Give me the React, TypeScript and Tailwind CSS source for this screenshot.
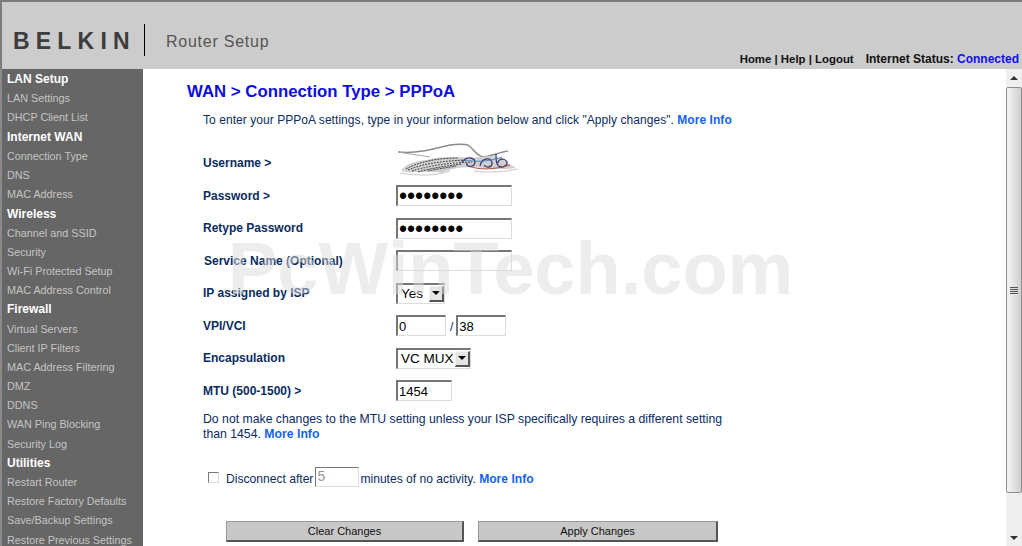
const sideNav = [
  { title: "LAN Setup", links: ["LAN Settings", "DHCP Client List"] },
  { title: "Internet WAN", links: ["Connection Type", "DNS", "MAC Address"] },
  { title: "Wireless", links: ["Channel and SSID", "Security", "Wi-Fi Protected Setup", "MAC Address Control"] },
  { title: "Firewall", links: ["Virtual Servers", "Client IP Filters", "MAC Address Filtering", "DMZ", "DDNS", "WAN Ping Blocking", "Security Log"] },
  { title: "Utilities", links: ["Restart Router", "Restore Factory Defaults", "Save/Backup Settings", "Restore Previous Settings"] },
];

const inputClass =
  "h-[21px] border-t-2 border-l-2 border-r border-b border-t-[#767676] border-l-[#767676] border-r-[#dcdcdc] border-b-[#dcdcdc] bg-white px-[1px] text-[13px] text-black outline-none";

const MoreInfo = () => <a className="font-bold text-[#1464f0]">More Info</a>;

const Row = ({ label, children, indent }: { label: string; children: React.ReactNode; indent?: boolean }) => (
  <div className="flex h-[32.5px] items-center">
    <div className={`w-[193px] text-[12px] font-bold text-[#0b2c5f] ${indent ? "pl-[1px]" : ""}`}>{label}</div>
    {children}
  </div>
);

const FakeSelect = ({ value, width }: { value: string; width: string }) => (
  <div className={`flex h-[21px] items-center justify-between border-t-2 border-l-2 border-r border-b border-t-[#767676] border-l-[#767676] border-r-[#dcdcdc] border-b-[#dcdcdc] bg-white pl-[3px] text-[13.5px] text-black ${width}`}>
    <span>{value}</span>
    <span className="flex h-[16px] w-[15px] items-center justify-center border border-r-2 border-b-2 border-[#f4f4f4] border-r-[#555] border-b-[#555] bg-[#e4e4e4]">
      <span className="h-0 w-0 border-x-[4px] border-t-[4px] border-x-transparent border-t-black" />
    </span>
  </div>
);

const CaptchaBlob = () => (
  <svg width="124" height="34" viewBox="0 0 124 34" className="-mt-[6px]">
    {/* outline on top */}
    <path d="M2 9 C20 11 38 6 54 2 C62 1 68 1 72 2 C78 6 80 13 88 14 C96 13 104 9 112 8" fill="none" stroke="#8c8c8c" strokeWidth="1.5" />
    <path d="M2 9 C12 11 24 12 34 14" fill="none" stroke="#a8a8a8" strokeWidth="1" />
    {/* body */}
    <path d="M5 28 C8 22 16 19 30 17 C46 13 62 14 78 15 C90 12 104 12 112 20 L120 25 C108 27 92 26 78 24 C64 24 54 26 46 30 C30 27 16 31 5 28 Z" fill="#cfcfcf" />
    <path d="M10 26 C24 18 44 15 62 15 M12 27 C28 20 48 18 70 17 M16 28 C32 23 50 20 76 19 M22 29 C36 25 50 23 66 21 M32 28 C40 26 50 25 60 23" fill="none" stroke="#3c3c3c" strokeWidth="1" strokeDasharray="2 1" />
    <path d="M8 28 C24 21 42 18 58 18 M20 27 C34 22 50 22 64 19" fill="none" stroke="#f4f4f4" strokeWidth="0.8" strokeDasharray="1 2" />
    {/* swirls */}
    <path d="M66 19 C72 12 82 15 78 22 C74 25 70 23 71 20 M84 23 C86 14 96 14 96 20 C96 25 90 25 88 22 M100 11 C100 17 100 23 105 24 C111 24 114 18 107 16 C104 16 102 18 102 20" fill="none" stroke="#3f3a78" strokeWidth="1.3" />
    <path d="M72 23 C84 27 96 27 114 22" fill="none" stroke="#b04030" strokeWidth="0.9" />
    <path d="M68 17 C80 19 92 19 106 14" fill="none" stroke="#3a7ab0" strokeWidth="0.8" />
    {/* faint lower edge */}
    <path d="M4 30 C22 33 40 33 54 28 M78 28 C92 30 108 29 122 26" fill="none" stroke="#c8c8c8" strokeWidth="1" />
  </svg>
);

const Scrollbar = () => (
  <div className="flex w-[16px] shrink-0 flex-col bg-[#efefef]">
    <div className="flex h-[18px] items-center justify-center">
      <span className="h-0 w-0 border-x-[4px] border-b-[4px] border-x-transparent border-b-[#333]" />
    </div>
    <div className="flex h-[406px] items-center justify-center rounded-[2px] border border-[#8f8f8f] bg-gradient-to-r from-[#f4f4f4] to-[#cfcfcf]">
      <div className="flex w-[8px] flex-col gap-[1px]">
        <span className="h-[1px] bg-[#555]" />
        <span className="h-[1px] bg-[#555]" />
        <span className="h-[1px] bg-[#555]" />
        <span className="h-[1px] bg-[#555]" />
      </div>
    </div>
    <div className="flex-1" />
    <div className="flex h-[16px] items-center justify-center">
      <span className="h-0 w-0 border-x-[4px] border-t-[4px] border-x-transparent border-t-[#333]" />
    </div>
  </div>
);

export default function App() {
  return (
    <div className="flex h-[546px] w-[1022px] flex-col overflow-hidden font-['Liberation_Sans',Arial,sans-serif]">
      {/* HEADER */}
      <header className="flex h-[69px] shrink-0 border-t-2 border-l-2 border-[#7c7c7c] bg-[#cccccc]">
        <div className="flex items-start pt-[22px]">
          <div className="ml-[11px] mt-[4px] h-[26px] w-[131px] text-[23px] font-bold leading-[26px] tracking-[6.2px] text-[#3d3d3d]">BELKIN</div>
          <div className="h-[32px] w-px bg-black" />
          <div className="ml-[21px] mt-[8px] text-[16px] leading-[20px] tracking-[0.75px] text-[#555]">Router Setup</div>
        </div>
        <div className="ml-auto flex items-baseline self-end pb-[3px] pr-[3px] font-bold leading-[14px] text-[#111]">
          <span className="text-[11.4px]">Home | Help | Logout</span>
          <span className="ml-[12px] whitespace-pre text-[12px]">Internet Status: </span>
          <span className="text-[12px] text-[#1010f0]">Connected</span>
        </div>
      </header>

      <div className="flex min-h-0 flex-1">
        {/* SIDEBAR */}
        <nav className="w-[143px] shrink-0 border-l-2 border-[#8a8a8a] bg-[#666666] pl-[5px] pt-[0.6px]">
          {sideNav.map((group) => (
            <div key={group.title}>
              <div className="flex h-[19.2px] items-center text-[12px] font-bold text-white">{group.title}</div>
              {group.links.map((link) => (
                <div key={link} className="flex h-[19.2px] items-center whitespace-nowrap text-[10.8px] text-[#c4c4c4]">{link}</div>
              ))}
            </div>
          ))}
        </nav>

        {/* MAIN */}
        <main className="relative min-w-0 flex-1 overflow-hidden bg-white pl-[44px] pt-[13px]">
          <h1 className="text-[16.8px] font-bold leading-[20px] text-[#0d0de0]">WAN &gt; Connection Type &gt; PPPoA</h1>
          <div className="ml-[16px]">
            <p className="mt-[11px] text-[12px] leading-[14px] tracking-[0.055px] text-[#0b2c5f]">
              To enter your PPPoA settings, type in your information below and click "Apply changes". <MoreInfo />
            </p>
            <div className="mt-[20px]">
              <Row label="Username >">
                <CaptchaBlob />
              </Row>
              <Row label="Password >">
                <input readOnly type="password" value="password" className={`${inputClass} w-[116px] text-[23px]`} />
              </Row>
              <Row label="Retype Password">
                <input readOnly type="password" value="password" className={`${inputClass} w-[116px] text-[23px]`} />
              </Row>
              <Row label="Service Name (Optional)" indent>
                <input readOnly className={`${inputClass} w-[116px] bg-transparent`} />
              </Row>
              <Row label="IP assigned by ISP">
                <FakeSelect value="Yes" width="w-[49px]" />
              </Row>
              <Row label="VPI/VCI">
                <input readOnly value="0" className={`${inputClass} w-[50px]`} />
                <span className="ml-[4px] mr-[3px] mt-[3px] text-[12px] text-[#0b2c5f]">/</span>
                <input readOnly value="38" className={`${inputClass} w-[50px]`} />
              </Row>
              <Row label="Encapsulation">
                <FakeSelect value="VC MUX" width="w-[75px]" />
              </Row>
              <Row label="MTU (500-1500) >">
                <input readOnly value="1454" className={`${inputClass} w-[56px]`} />
              </Row>
            </div>
            <p className="mt-[5px] w-[525px] text-[12.25px] leading-[15px] text-[#0b2c5f]">
              Do not make changes to the MTU setting unless your ISP specifically requires a different setting than 1454. <MoreInfo />
            </p>
            <div className="ml-[5px] mt-[24px] flex h-[21px] items-center text-[12.1px] text-[#0b2c5f]">
              <input type="checkbox" readOnly className="mr-[7px] mt-[1px] h-[11px] w-[11px] appearance-none border border-t-[#777] border-l-[#777] border-r-[#ddd] border-b-[#ddd] bg-white" />
              <span className="mt-[6px]">Disconnect after</span>
              <input readOnly value="5" className="ml-[2px] h-[20px] w-[44px] border-t border-l border-r border-b border-t-[#777] border-l-[#777] border-r-[#ddd] border-b-[#ddd] px-[1px] text-[14px] text-[#999] outline-none" />
              <span className="ml-[1px] mt-[6px] whitespace-pre">minutes of no activity. </span>
              <span className="mt-[6px]"><MoreInfo /></span>
            </div>
            <div className="ml-[23px] mt-[34px] flex gap-[14px]">
              <button className="h-[21px] w-[238px] border border-r-2 border-b-2 border-[#9a9a9a] border-r-[#555] border-b-[#555] bg-[#c8c8c8] text-[11px] text-[#111]">Clear Changes</button>
              <button className="h-[21px] w-[240px] border border-r-2 border-b-2 border-[#9a9a9a] border-r-[#555] border-b-[#555] bg-[#c8c8c8] text-[11px] text-[#111]">Apply Changes</button>
            </div>
          </div>

          {/* watermark */}
          <div className="pointer-events-none absolute left-[85px] top-[160px] whitespace-nowrap text-[74px] font-bold leading-[80px] text-[#dcdcdc]/50">PcWinTech.com</div>
        </main>

        <Scrollbar />
      </div>
    </div>
  );
}
